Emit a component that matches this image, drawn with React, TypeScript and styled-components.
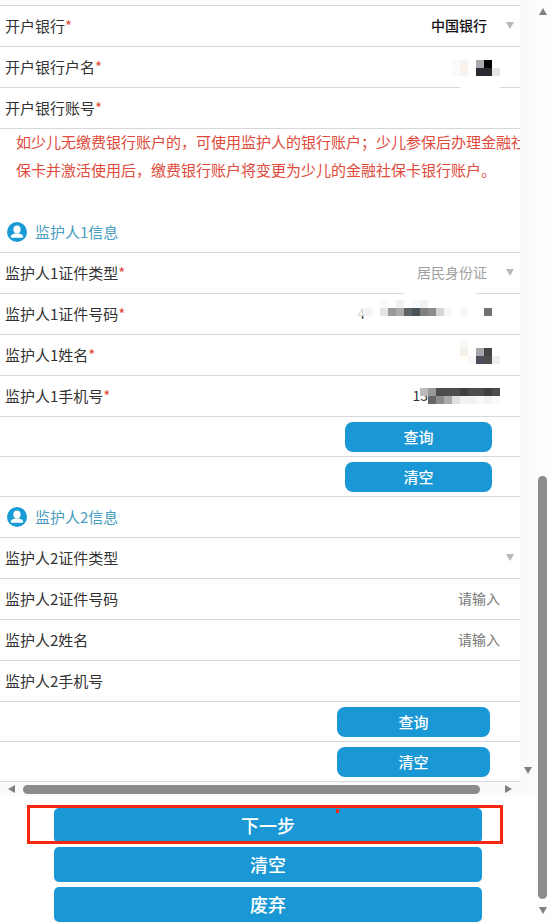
import React from 'react';
import styled, { createGlobalStyle } from 'styled-components';

const GlobalStyle = createGlobalStyle`
    html, body {
        margin: 0;
        height: 100%;
        overflow: hidden;
        background: #fff;
        font-family: "Noto Sans CJK SC", "Noto Sans", sans-serif;
    }
`;

const Page = styled.div`
    display: flex;
    width: 550px;
    height: 922px;
    overflow: hidden;
`;

const Content = styled.div`
    display: flex;
    flex-direction: column;
    width: 535px;
`;

const Frame = styled.div`
    display: flex;
    height: 782px;
`;

const Panel = styled.div`
    width: 520px;
    height: 782px;
    padding-top: 5px;
    box-sizing: border-box;
    overflow: hidden;
`;

const TopLine = styled.div`
    height: 1px;
    background: #d8d8d8;
`;

// Rows
const Row = styled.div`
    position: relative;
    display: flex;
    align-items: center;
    height: 41px;
    padding: 0 6px 2px 5px;
    box-sizing: border-box;
    border-bottom: 1px solid #d8d8d8;
`;

const Label = styled.div`
    flex: 1;
    font-size: 15px;
    color: #333;
`;

const Star = styled.span`
    color: #e04a3a;
`;

const Value = styled.div<{ $tone: 'dark' | 'muted' | 'hint' }>`
    font-size: 14px;
    font-weight: ${({ $tone }) => ($tone === 'dark' ? 500 : 400)};
    color: ${({ $tone }) => ({ dark: '#111', muted: '#a0a0a0', hint: '#777' }[$tone])};
    margin-right: ${({ $tone }) => ($tone === 'hint' ? '14px' : '19px')};
`;

const SelectArrow = styled.div`
    width: 0;
    height: 0;
    margin-top: 1px;
    border-left: 4.5px solid transparent;
    border-right: 4.5px solid transparent;
    border-top: 7px solid #b8b8b8;
`;

const LineGap = styled.div<{ $right: number; $width: number }>`
    position: absolute;
    bottom: -1px;
    right: ${({ $right }) => $right}px;
    width: ${({ $width }) => $width}px;
    height: 1px;
    background: #fff;
`;

// Pixelated part of a number
const MaskText = styled.span`
    font-size: 14px;
    color: #333;
`;

const Mosaic = styled.div<{ $top: number; $overlap: number }>`
    align-self: flex-start;
    display: grid;
    grid-auto-columns: 8px;
    grid-auto-rows: 8px;
    margin: ${({ $top }) => $top}px 14px 0 -${({ $overlap }) => $overlap}px;
`;

const Cell = styled.div<{ $color: string; $row: number; $col: number }>`
    grid-row: ${({ $row }) => $row};
    grid-column: ${({ $col }) => $col};
    background: ${({ $color }) => $color || 'transparent'};
`;

const Notice = styled.div`
    margin-top: -1px;
    padding: 0 0 28px 16px;
    font-size: 15px;
    line-height: 28px;
    color: #e04a3a;
    white-space: nowrap;
    overflow: hidden;
`;

const SectionHead = styled.div`
    display: flex;
    align-items: center;
    gap: 8px;
    height: 41px;
    padding: 0 0 2px 7px;
    box-sizing: border-box;
    border-bottom: 1px solid #d8d8d8;
    font-size: 15px;
    color: #4a9dc0;
`;

const PersonSvg = styled.svg`
    margin-top: 2px;
`;

const ButtonRow = styled.div<{ $right: number }>`
    display: flex;
    justify-content: flex-end;
    height: 40px;
    padding: 5px ${({ $right }) => $right}px 0 0;
    box-sizing: border-box;
    border-bottom: 1px solid #d8d8d8;
`;

const SmallButton = styled.button<{ $width: number }>`
    width: ${({ $width }) => $width}px;
    height: 30px;
    padding: 0 0 2px;
    border: 0;
    border-radius: 8px;
    background: #1a98d5;
    color: #fff;
    font-family: inherit;
    font-size: 15px;
    font-weight: 500;
`;

// Scrollbars
const Arrow = styled.div<{ $dir: 'up' | 'down' | 'left' | 'right' }>`
    flex: none;
    width: 0;
    height: 0;
    border-style: solid;
    border-color: transparent;
    border-width: ${({ $dir }) =>
        $dir === 'up' || $dir === 'down' ? '3.5px 4.5px' : '4.5px 3.5px'};
    ${({ $dir }) => ({
        up: 'border-top-width: 0; border-bottom: 7px solid #808080;',
        down: 'border-bottom-width: 0; border-top: 7px solid #808080;',
        left: 'border-left-width: 0; border-right: 7px solid #808080;',
        right: 'border-right-width: 0; border-left: 7px solid #808080;',
    }[$dir])}
`;

const InnerBar = styled.div`
    display: flex;
    flex-direction: column;
    justify-content: flex-end;
    align-items: center;
    width: 15px;
    padding-bottom: 8px;
    box-sizing: border-box;
    background: #fafafa;
`;

const BottomBar = styled.div`
    display: flex;
    align-items: center;
    height: 14px;
    padding-left: 8px;
    box-sizing: border-box;
    background: #fafafa;
`;

const HThumb = styled.div`
    width: 457px;
    height: 9px;
    margin: 0 25px 0 8px;
    border-radius: 5px;
    background: #8c8c8c;
`;

const OuterBar = styled.div`
    display: flex;
    flex-direction: column;
    align-items: center;
    width: 15px;
    padding: 8px 0;
    box-sizing: border-box;
    background: #fdfdfd;
`;

const VThumb = styled.div`
    width: 9px;
    height: 423px;
    margin: auto 0 8px;
    border-radius: 5px;
    background: #8c8c8c;
`;

// Bottom actions
const Actions = styled.div`
    position: relative;
    display: flex;
    flex-direction: column;
    gap: 4px;
    padding: 12px 0 0 54px;
`;

const BigButton = styled.button`
    width: 428px;
    height: 35px;
    padding: 0 0 2px;
    border: 0;
    border-radius: 5px;
    background: #1a98d5;
    color: #fff;
    font-family: inherit;
    font-size: 18px;
    font-weight: 500;
    &:last-of-type {
        margin-top: 1px;
    }
`;

const Highlight = styled.div`
    position: absolute;
    left: 27px;
    top: 9px;
    width: 476px;
    height: 39px;
    box-sizing: border-box;
    border: 3px solid #f5280f;
`;

const HighlightTick = styled.div`
    position: absolute;
    left: 306px;
    top: 1px;
    width: 3px;
    height: 4px;
    background: #f5280f;
`;

const PersonIcon: React.FC = () => (
    <PersonSvg width="20" height="20" viewBox="0 0 20 20">
        <circle cx="10" cy="10" r="10" fill="#1a9ad6" />
        <ellipse cx="10" cy="7.6" rx="3.6" ry="4" fill="#fff" />
        <path d="M3.8 14.8c0-1.9 2.2-2.9 4.2-3.3h4c2 .4 4.2 1.4 4.2 3.3 0 .6-.4 1-1 1H4.8c-.6 0-1-.4-1-1z" fill="#fff" />
    </PersonSvg>
);

const Blur: React.FC<{ rows: string[][]; top: number; overlap?: number }> = ({ rows, top, overlap = 0 }) => (
    <Mosaic $top={top} $overlap={overlap}>
        {rows.map((cells, r) =>
            cells.map((color, c) => <Cell key={`${r}-${c}`} $color={color} $row={r + 1} $col={c + 1} />)
        )}
    </Mosaic>
);

const Field: React.FC<{ label: string; required?: boolean; children?: React.ReactNode }> = ({ label, required, children }) => (
    <Row>
        <Label>
            {label}
            {required && <Star>*</Star>}
        </Label>
        {children}
    </Row>
);

const bankNameBlur = [
    ['#fbfbfb', '#f8f3ec', '', '#a9a9b0', '#000000', ''],
    ['#fbfbfb', '#f8f3ec', '', '#2a2a33', '#2a2a33', '#e5e5e5'],
];

const idBlur = [
    ['', '', '', '#fafafa', '', '#f2f2f2', '', '#f7fbff', '#f2f2f2', '', '', '', '', '', '', '', '', ''],
    ['rgba(255,255,255,0.8)', '#f3f3f8', '', '#e4e4e4', '#999999', '#aaaaaa', '#5e6468', '#4a5358', '#808080', '#8c8c8c', '#d4d4d4', '#f5f5f5', '', '#f5f5f5', '', '', '#737373', ''],
];

const nameBlur = [
    ['', '#f7f7f7', '', '', '', ''],
    ['', '#f5f1e8', '', '#a5a5ad', '#444444', ''],
    ['', '#fffdf5', '#f8f8fb', '#4d4d5c', '#4d4d4d', '#eeeeee'],
];

const phoneBlur = [
    ['#bbbbbb', '#999999', '#4d4d4d', '#4d4d4d', '#4d4d4d', '#404040', '#4d4d4d', '#4d4d4d', '#404040', '#4d4d4d'],
    ['', '#666666', '#8c8c8c', '#aaaaaa', '#e0e0e0', '#f2f2f2', '#f2f2f2', '#f8f8f8', '#f4f4f4', '#fafafa'],
];

const App: React.FC = () => (
    <>
        <GlobalStyle />
        <Page>
            <Content>
                <Frame>
                    <Panel>
                        <TopLine />
                        <Field label="开户银行" required>
                            <Value $tone="dark">中国银行</Value>
                            <SelectArrow />
                        </Field>
                        <Field label="开户银行户名" required>
                            <Blur rows={bankNameBlur} top={13} />
                            <LineGap $right={20} $width={40} />
                        </Field>
                        <Field label="开户银行账号" required />
                        <Notice>
                            如少儿无缴费银行账户的，可使用监护人的银行账户；少儿参保后办理金融社
                            <br />
                            保卡并激活使用后，缴费银行账户将变更为少儿的金融社保卡银行账户。
                        </Notice>

                        <SectionHead>
                            <PersonIcon />
                            监护人1信息
                        </SectionHead>
                        <Field label="监护人1证件类型" required>
                            <Value $tone="muted">居民身份证</Value>
                            <SelectArrow />
                            <LineGap $right={44} $width={72} />
                        </Field>
                        <Field label="监护人1证件号码" required>
                            <MaskText>4</MaskText>
                            <Blur rows={idBlur} top={6} overlap={9} />
                        </Field>
                        <Field label="监护人1姓名" required>
                            <Blur rows={nameBlur} top={5} />
                        </Field>
                        <Field label="监护人1手机号" required>
                            <MaskText>13</MaskText>
                            <Blur rows={phoneBlur} top={12} overlap={8} />
                        </Field>
                        <ButtonRow $right={28}>
                            <SmallButton $width={147}>查询</SmallButton>
                        </ButtonRow>
                        <ButtonRow $right={28}>
                            <SmallButton $width={147}>清空</SmallButton>
                        </ButtonRow>

                        <SectionHead>
                            <PersonIcon />
                            监护人2信息
                        </SectionHead>
                        <Field label="监护人2证件类型">
                            <SelectArrow />
                        </Field>
                        <Field label="监护人2证件号码">
                            <Value $tone="hint">请输入</Value>
                        </Field>
                        <Field label="监护人2姓名">
                            <Value $tone="hint">请输入</Value>
                        </Field>
                        <Field label="监护人2手机号" />
                        <ButtonRow $right={30}>
                            <SmallButton $width={153}>查询</SmallButton>
                        </ButtonRow>
                        <ButtonRow $right={30}>
                            <SmallButton $width={153}>清空</SmallButton>
                        </ButtonRow>
                    </Panel>
                    <InnerBar>
                        <Arrow $dir="down" />
                    </InnerBar>
                </Frame>
                <BottomBar>
                    <Arrow $dir="left" />
                    <HThumb />
                    <Arrow $dir="right" />
                </BottomBar>
                <Actions>
                    <BigButton>下一步</BigButton>
                    <BigButton>清空</BigButton>
                    <BigButton>废弃</BigButton>
                    <Highlight>
                        <HighlightTick />
                    </Highlight>
                </Actions>
            </Content>
            <OuterBar>
                <Arrow $dir="up" />
                <VThumb />
                <Arrow $dir="down" />
            </OuterBar>
        </Page>
    </>
);

export default App;
